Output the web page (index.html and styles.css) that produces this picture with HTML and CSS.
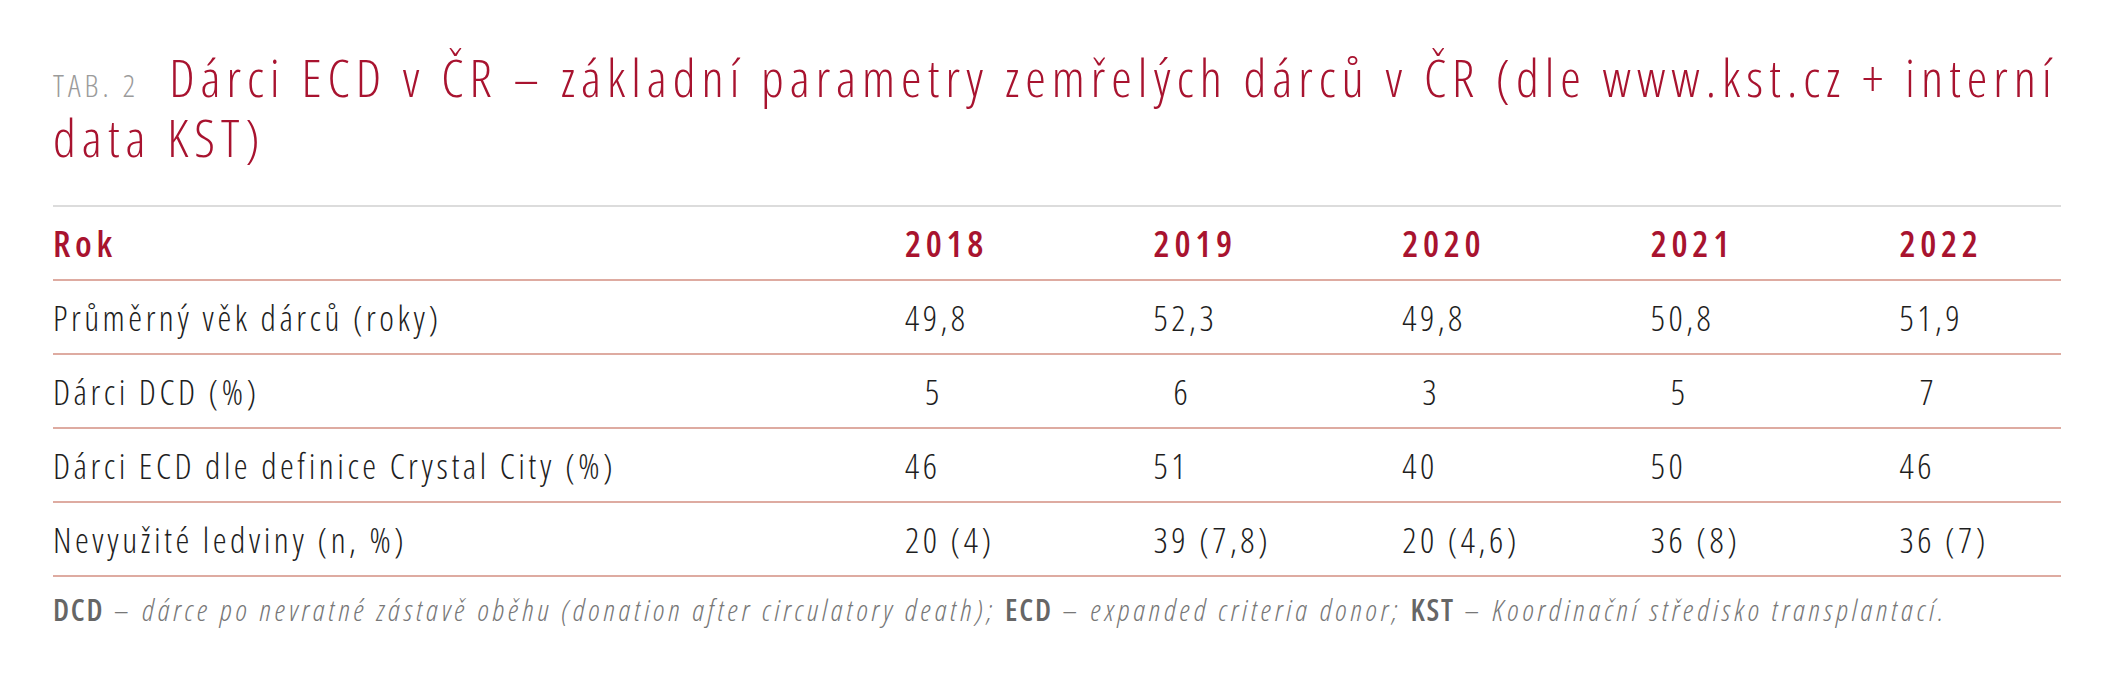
FILE: index.html
```html
<!DOCTYPE html>
<html lang="cs">
<head>
<meta charset="utf-8">
<title>TAB. 2 Dárci ECD v ČR</title>
<link rel="stylesheet" href="styles.css">
</head>
<body>
<div class="page">
  <header class="title"><div class="title-row"><span class="tab">TAB. 2</span><h1 class="title-text">Dárci ECD v ČR – základní parametry zemřelých dárců v ČR (dle www.kst.cz + interní</h1></div><div class="title-row"><span class="title-text">data KST)</span></div></header>
  <table class="data">
    <thead>
      <tr>
        <th class="label">Rok</th>
        <th>2018</th>
        <th>2019</th>
        <th>2020</th>
        <th>2021</th>
        <th>2022</th>
      </tr>
    </thead>
    <tbody>
      <tr>
        <td class="label">Průměrný věk dárců (roky)</td>
        <td>49,8</td>
        <td>52,3</td>
        <td>49,8</td>
        <td>50,8</td>
        <td>51,9</td>
      </tr>
      <tr>
        <td class="label">Dárci DCD (%)</td>
        <td class="single">5</td>
        <td class="single">6</td>
        <td class="single">3</td>
        <td class="single">5</td>
        <td class="single">7</td>
      </tr>
      <tr>
        <td class="label">Dárci ECD dle definice Crystal City (%)</td>
        <td>46</td>
        <td>51</td>
        <td>40</td>
        <td>50</td>
        <td>46</td>
      </tr>
      <tr>
        <td class="label">Nevyužité ledviny (n, %)</td>
        <td>20 (4)</td>
        <td>39 (7,8)</td>
        <td>20 (4,6)</td>
        <td>36 (8)</td>
        <td>36 (7)</td>
      </tr>
    </tbody>
  </table>
  <p class="note"><b>DCD</b> – <i>dárce po nevratné zástavě oběhu (donation after circulatory death);</i> <b>ECD</b> – <i>expanded criteria donor;</i> <b>KST</b> – <i>Koordinační středisko transplantací.</i></p>
</div>
</body>
</html>
```

FILE: styles.css
```css
html, body {
  margin: 0;
  padding: 0;
  background: #ffffff;
}

body {
  font-family: "Open Sans", "DejaVu Sans", sans-serif;
  font-stretch: 75%;
  color: #1e1e1e;
}

.page {
  padding: 47px 0 0 53px;
  width: 2008px;
}

.title {
  display: block;
  margin: 0;
  white-space: nowrap;
}

.title-row {
  display: flex;
  align-items: baseline;
  height: 60px;
}

.title-text {
  margin: 0;
  font-size: 52px;
  line-height: 60px;
  font-weight: 350;
  letter-spacing: 0.115em;
  color: #a8132f;
}

.tab {
  font-size: 31px;
  line-height: normal;
  font-weight: 300;
  letter-spacing: 0.13em;
  color: #9b9b9b;
  margin-right: 30px;
}

.data {
  margin-top: 38px;
  width: 100%;
  border-collapse: collapse;
  table-layout: fixed;
  border-top: 2px solid #dcdcdc;
}

.data th,
.data td {
  height: 72px;
  padding: 0 0 0 87px;
  border-bottom: 2px solid #deaba1;
  text-align: left;
  vertical-align: middle;
  white-space: nowrap;
}

.data th {
  font-size: 36px;
  font-weight: 600;
  letter-spacing: 0.13em;
  color: #a8132f;
}

.data td {
  font-size: 35px;
  font-weight: 300;
  letter-spacing: 0.1em;
}

.data .label {
  width: 765px;
  padding-left: 0;
}

.data td.single {
  padding-left: 107px;
}

.note {
  margin: 15px 0 0;
  font-size: 30px;
  line-height: 36px;
  letter-spacing: 0.127em;
  color: #777777;
  font-weight: 300;
}

.note b {
  font-weight: 600;
  color: #666666;
  letter-spacing: 0.06em;
}

.note i {
  font-style: italic;
}
```
